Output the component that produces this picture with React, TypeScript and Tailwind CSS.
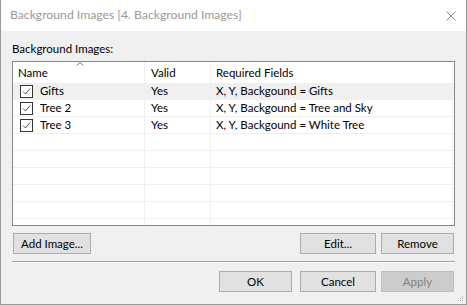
const rows = [
  { name: "Gifts", valid: "Yes", fields: "X, Y, Backgound = Gifts", selected: true },
  { name: "Tree 2", valid: "Yes", fields: "X, Y, Backgound = Tree and Sky", selected: false },
  { name: "Tree 3", valid: "Yes", fields: "X, Y, Backgound = White Tree", selected: false },
];

function CheckBox() {
  return (
    <svg width="13" height="13" viewBox="0 0 13 13" className="shrink-0">
      <rect x="0.5" y="0.5" width="12" height="12" fill="#fff" stroke="#333" />
      <path d="M3 6.5 L5.5 9 L10 3.5" fill="none" stroke="#555" strokeWidth="1" />
    </svg>
  );
}

function Button({
  children,
  className,
  disabled = false,
}: {
  children: React.ReactNode;
  className: string;
  disabled?: boolean;
}) {
  return (
    <button
      type="button"
      disabled={disabled}
      className={
        "flex h-[21px] items-center justify-center border text-[11.5px] leading-none " +
        (disabled
          ? "border-[#bfbfbf] bg-[#cccccc] text-[#838383] "
          : "border-[#adadad] bg-[#e1e1e1] text-black ") +
        className
      }
    >
      {children}
    </button>
  );
}

export default function App() {
  const empty = Array.from({ length: 6 });

  return (
    <div
      className="relative flex h-[305px] w-[467px] flex-col border-x border-b border-[#9a9a9a] bg-[#f0f0f0] text-[11.5px] text-black"
      style={{ fontFamily: "Lato, 'Noto Sans', sans-serif" }}
    >
      {/* Title bar */}
      <div className="flex h-[31px] items-center justify-between bg-white pl-[9px] pr-[10px]">
        <span className="text-[12.2px] text-[#999]">Background Images [4. Background Images]</span>
        <svg width="10" height="10" viewBox="0 0 10 10">
          <path d="M0.5 0.5 L9.5 9.5 M9.5 0.5 L0.5 9.5" stroke="#8a8a8a" strokeWidth="1" />
        </svg>
      </div>

      <div className="flex flex-1 flex-col px-[11px] pt-[10px]">
        <div className="h-4 leading-4">Background Images:</div>

        {/* List */}
        <div className="mt-[4px] h-[165px] w-[443px] overflow-hidden border border-[#828790] bg-white">
          <div className="flex h-[21px] items-center">
            <div className="relative flex h-full w-[132px] items-center border-r border-[#f0f0f0] pl-[5px]">
              Name
              <svg width="8" height="4" viewBox="0 0 8 4" className="absolute left-[63px] top-0">
                <path d="M0.5 3.5 L4 0.5 L7.5 3.5" fill="none" stroke="#777" strokeWidth="1" />
              </svg>
            </div>
            <div className="flex h-full w-[66px] items-center border-r border-[#f0f0f0] pl-[6px]">Valid</div>
            <div className="flex h-full w-[242px] items-center border-r border-[#f0f0f0] pl-[5px]">
              Required Fields
            </div>
          </div>

          {rows.map((r) => (
            <div
              key={r.name}
              className={
                "flex h-[17px] border-b border-[#f0f0f0] " + (r.selected ? "bg-[#f0f0f0]" : "bg-white")
              }
            >
              <div className="flex h-full w-[132px] items-center gap-[7px] border-r border-[#f0f0f0] pl-[7px]">
                <CheckBox />
                <span>{r.name}</span>
              </div>
              <div className="flex h-full w-[66px] items-center border-r border-[#f0f0f0] pl-[6px]">
                {r.valid}
              </div>
              <div className="flex h-full w-[242px] items-center border-r border-[#f0f0f0] pl-[5px]">
                {r.fields}
              </div>
            </div>
          ))}

          {empty.map((_, i) => (
            <div key={i} className="flex h-[17px] border-b border-[#f0f0f0]">
              <div className="h-full w-[132px] border-r border-[#f0f0f0]" />
              <div className="h-full w-[66px] border-r border-[#f0f0f0]" />
              <div className="h-full w-[242px] border-r border-[#f0f0f0]" />
            </div>
          ))}
        </div>

        {/* Image buttons */}
        <div className="ml-[1px] mr-[1px] mt-[7px] flex">
          <Button className="w-[78px]">Add Image...</Button>
          <div className="flex-1" />
          <Button className="w-[76px]">Edit...</Button>
          <Button className="ml-[5px] w-[73px]">Remove</Button>
        </div>

        {/* Separator */}
        <div className="mt-[7px] h-[2px] border-t border-b border-t-[#a0a0a0] border-b-white" />

        {/* Dialog buttons */}
        <div className="mr-[1px] mt-[8px] flex justify-end">
          <Button className="w-[73px]">OK</Button>
          <Button className="ml-[8px] w-[76px]">Cancel</Button>
          <Button className="ml-[5px] w-[73px]" disabled>
            Apply
          </Button>
        </div>
      </div>

      {/* Size grip */}
      <svg width="7" height="7" viewBox="0 0 7 7" className="absolute bottom-[2px] right-[2px]">
        <rect x="5" y="1" width="1" height="1" fill="#b0b0b0" />
        <rect x="3" y="3" width="1" height="1" fill="#b0b0b0" />
        <rect x="5" y="3" width="1" height="1" fill="#b0b0b0" />
        <rect x="1" y="5" width="1" height="1" fill="#b0b0b0" />
        <rect x="3" y="5" width="1" height="1" fill="#b0b0b0" />
        <rect x="5" y="5" width="1" height="1" fill="#b0b0b0" />
      </svg>
    </div>
  );
}
